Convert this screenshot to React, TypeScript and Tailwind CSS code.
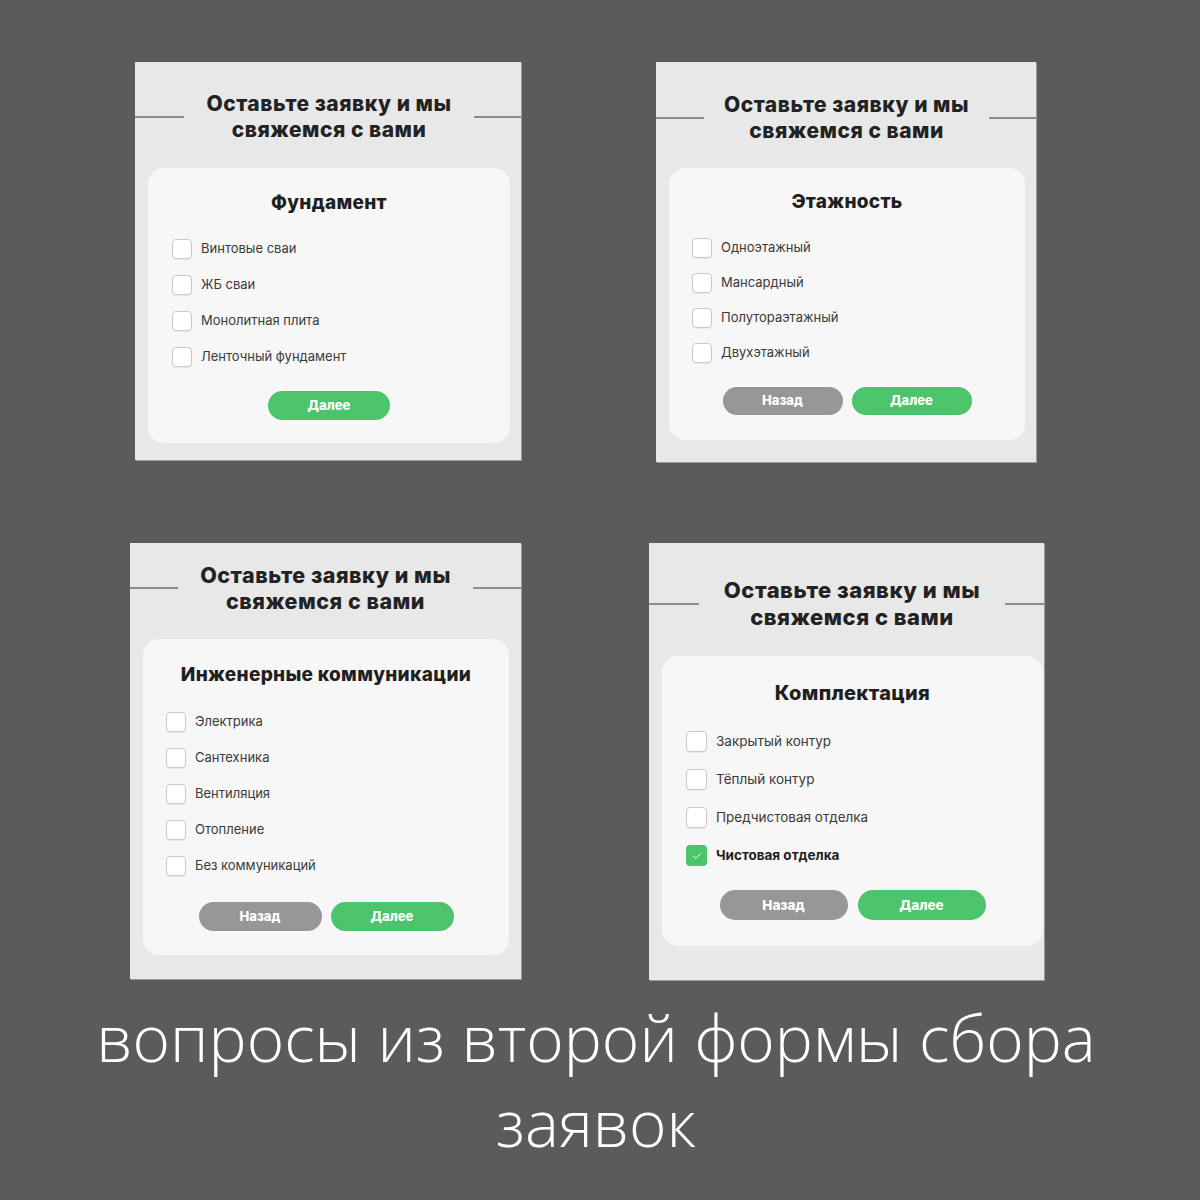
import React from "react";

type Step = {
  heading: string;
  options: string[];
  checked?: number;
  back?: boolean;
  // layout tweaks per card, full class strings
  panel: string;
  title: string;
  lineL: string;
  lineR: string;
  card: string;
  headingCls: string;
  list: string;
  row: string;
  box: string;
  label: string;
  actions: string;
  btn: string;
};

const steps: Step[] = [
  {
    heading: "Фундамент",
    options: ["Винтовые сваи", "ЖБ сваи", "Монолитная плита", "Ленточный фундамент"],
    panel: "w-[386px] pt-[29px] pb-[17px]",
    title: "text-[21px] leading-[26px]",
    lineL: "w-[49px]",
    lineR: "w-[47px]",
    card: "mt-[25px] ml-[13px] mr-[11px] pt-[23px] pb-[23px]",
    headingCls: "text-[19px] leading-[24px]",
    list: "mt-[24px] gap-[16px] pl-[24px]",
    row: "gap-[9px]",
    box: "w-[20px] h-[20px]",
    label: "text-[13px]",
    actions: "mt-[24px] gap-[9px]",
    btn: "w-[122px] h-[29px] text-[13px]",
  },
  {
    heading: "Этажность",
    options: ["Одноэтажный", "Мансардный", "Полутораэтажный", "Двухэтажный"],
    back: true,
    panel: "w-[380px] pt-[30px] pb-[22px]",
    title: "text-[21px] leading-[26px]",
    lineL: "w-[48px]",
    lineR: "w-[47px]",
    card: "mt-[24px] ml-[13px] mr-[11px] pt-[22px] pb-[25px]",
    headingCls: "text-[19px] leading-[24px]",
    list: "mt-[24px] gap-[15px] pl-[23px]",
    row: "gap-[9px]",
    box: "w-[20px] h-[20px]",
    label: "text-[13px]",
    actions: "mt-[24px] gap-[9px]",
    btn: "w-[120px] h-[28px] text-[13px]",
  },
  {
    heading: "Инженерные коммуникации",
    options: ["Электрика", "Сантехника", "Вентиляция", "Отопление", "Без коммуникаций"],
    back: true,
    panel: "w-[391px] pt-[19px] pb-[24px]",
    title: "text-[21.5px] leading-[26px]",
    lineL: "w-[48px]",
    lineR: "w-[48px]",
    card: "mt-[25px] ml-[13px] mr-[12px] pt-[24px] pb-[24px]",
    headingCls: "text-[19px] leading-[24px]",
    list: "mt-[25px] gap-[16px] pl-[23px]",
    row: "gap-[9px]",
    box: "w-[20px] h-[20px]",
    label: "text-[13px]",
    actions: "mt-[26px] gap-[9px]",
    btn: "w-[123px] h-[29px] text-[13px]",
  },
  {
    heading: "Комплектация",
    options: ["Закрытый контур", "Тёплый контур", "Предчистовая отделка", "Чистовая отделка"],
    checked: 3,
    back: true,
    panel: "w-[395px] pt-[34px] pb-[34px]",
    title: "text-[22px] leading-[27px]",
    lineL: "w-[50px]",
    lineR: "w-[39px]",
    card: "mt-[25px] ml-[13px] mr-[1px] pt-[25px] pb-[26px]",
    headingCls: "text-[20px] leading-[25px]",
    list: "mt-[25px] gap-[17px] pl-[24px]",
    row: "gap-[9px]",
    box: "w-[21px] h-[21px]",
    label: "text-[13.5px]",
    actions: "mt-[24px] gap-[10px]",
    btn: "w-[128px] h-[30px] text-[13.5px]",
  },
];

function Check({ on, cls }: { on: boolean; cls: string }) {
  if (on) {
    return (
      <span className={`${cls} shrink-0 rounded-[4px] bg-[#4cc46b] flex items-center justify-center`}>
        <svg viewBox="0 0 20 20" className="w-[12px] h-[12px]" fill="none">
          <polyline points="4,10.5 8,14 16,6" stroke="#ffffff" strokeWidth="1.6" strokeLinecap="round" strokeLinejoin="round" />
        </svg>
      </span>
    );
  }
  return <span className={`${cls} shrink-0 rounded-[4px] border border-[#c9c9c9] bg-white shadow-[0_1px_1px_rgba(0,0,0,0.06)]`} />;
}

function FormStep({ s }: { s: Step }) {
  return (
    <div className={`${s.panel} bg-[#e8e8e8] shadow-[1px_1px_0_0_#9b9b9b] flex flex-col`}>
      <div className="flex items-center">
        <div className={`${s.lineL} h-[2px] bg-[#8c8c8c]`} />
        <h2 className={`${s.title} flex-1 text-center font-extrabold tracking-[0.5px] text-[#222222]`}>
          Оставьте заявку и мы
          <br />
          свяжемся с вами
        </h2>
        <div className={`${s.lineR} h-[2px] bg-[#8c8c8c]`} />
      </div>

      <div className={`${s.card} bg-[#f7f7f7] rounded-[16px] flex flex-col`}>
        <h3 className={`${s.headingCls} text-center font-extrabold tracking-[0.3px] text-[#1f1f1f]`}>{s.heading}</h3>
        <ul className={`${s.list} flex flex-col`}>
          {s.options.map((o, i) => (
            <li key={o} className={`${s.row} flex items-center`}>
              <Check on={s.checked === i} cls={s.box} />
              <span
                className={`${s.label} ${s.checked === i ? "font-bold text-[#1f1f1f]" : "text-[#3a3a3a]"}`}
              >
                {o}
              </span>
            </li>
          ))}
        </ul>
        <div className={`${s.actions} flex justify-center`}>
          {s.back && (
            <button className={`${s.btn} rounded-full bg-[#979797] text-white font-extrabold`}>Назад</button>
          )}
          <button className={`${s.btn} rounded-full bg-[#4cc46b] text-white font-extrabold`}>Далее</button>
        </div>
      </div>
    </div>
  );
}

export default function App() {
  return (
    <div className="min-h-[1200px] w-[1200px] bg-[#5c5b59] pt-[62px] font-['Inter',sans-serif]">
      <div className="flex items-start pl-[135px] gap-[135px]">
        <FormStep s={steps[0]} />
        <FormStep s={steps[1]} />
      </div>
      <div className="flex items-start pl-[130px] gap-[128px] mt-[81px]">
        <FormStep s={steps[2]} />
        <FormStep s={steps[3]} />
      </div>
      <p className="mt-[15px] pr-[8px] text-center text-white font-light text-[64px] leading-[85px] font-['Open_Sans',sans-serif]">
        вопросы из второй формы сбора
        <br />
        заявок
      </p>
    </div>
  );
}
